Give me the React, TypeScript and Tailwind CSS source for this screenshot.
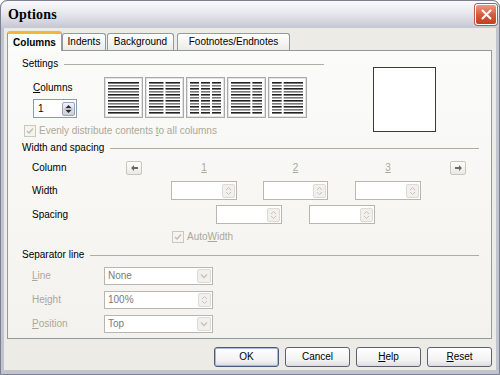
import React from "react";

// Options dialog, Windows XP silver look

const DIS = "text-[#aca899]";

function U({ children }: { children: React.ReactNode }) {
  return <span className="underline underline-offset-[1px]">{children}</span>;
}

function Heading({ label, width }: { label: string; width: number }) {
  return (
    <div className="flex items-center h-[14px]" style={{ width }}>
      <span className="text-black leading-[14px]">{label}</span>
      <div className="flex-1 h-px bg-[#aeaca4] ml-[6px]" />
    </div>
  );
}

function ColIcon({ cols }: { cols: number[] }) {
  const W = 31;
  const gap = 2;
  const sum = cols.reduce((a, b) => a + b, 0);
  const avail = W - gap * (cols.length - 1);
  let x = 4;
  const segs = cols.map((c) => {
    const w = (avail * c) / sum;
    const s = { x, w };
    x += w + gap;
    return s;
  });
  const rows = Array.from({ length: 11 }, (_, i) => 5 + i * 3);
  return (
    <svg width="39" height="41" viewBox="0 0 39 41">
      <rect x="0.5" y="0.5" width="38" height="40" fill="#fff" stroke="#a9a9a9" />
      <rect x="1.5" y="1.5" width="36" height="38" fill="#fff" stroke="#e2e2e2" />
      {rows.map((y, i) =>
        segs.map((s, j) => (
          <rect key={`${i}-${j}`} x={s.x} y={y} width={s.w} height="1.6" fill={i % 2 ? "#7a7a7a" : "#222"} />
        ))
      )}
    </svg>
  );
}

function SpinArrows({ enabled }: { enabled: boolean }) {
  const c = enabled ? "#2b2b2b" : "#c5c3b8";
  return (
    <div
      className={`w-[13px] h-[14px] mr-[1px] rounded-[2px] border ${
        enabled ? "border-[#9aa2b4] bg-[linear-gradient(to_bottom,#f2f3f7,#c9cdd9)]" : "border-[#dcdad2] bg-[#f1f0ec]"
      } flex items-center justify-center`}
    >
      <svg width="9" height="10" viewBox="0 0 9 10">
        {enabled ? (
          <>
            <path d="M1.5 4 L4.5 1 L7.5 4 Z" fill={c} />
            <path d="M1.5 6 L4.5 9 L7.5 6 Z" fill={c} />
            <line x1="0.5" y1="5" x2="8.5" y2="5" stroke="#9aa2b4" strokeWidth="1" />
          </>
        ) : (
          <>
            <path d="M2 4 L4.5 1.5 L7 4" fill="none" stroke={c} strokeWidth="1" />
            <path d="M2 6 L4.5 8.5 L7 6" fill="none" stroke={c} strokeWidth="1" />
          </>
        )}
      </svg>
    </div>
  );
}

function SpinBox({ width, value, enabled }: { width: number; value?: string; enabled?: boolean }) {
  return (
    <div
      className={`h-[19px] bg-white border ${enabled ? "border-[#8a9ab0]" : "border-[#b8b6ad]"} flex items-center`}
      style={{ width }}
    >
      <span className={`flex-1 pl-[4px] ${enabled ? "text-black" : "text-[#7a7a7a]"}`}>{value}</span>
      <SpinArrows enabled={!!enabled} />
    </div>
  );
}

function Combo({ value, spin }: { value: string; spin?: boolean }) {
  return (
    <div className="w-[109px] h-[18px] bg-white border border-[#b8b6ad] flex items-center">
      <span className="flex-1 pl-[3px] text-[#7a7a7a]">{value}</span>
      {spin ? (
        <SpinArrows enabled={false} />
      ) : (
        <div className="w-[14px] h-[14px] mr-[1px] rounded-[2px] border border-[#dcdad2] bg-[#f1f0ec] flex items-center justify-center">
          <svg width="8" height="6" viewBox="0 0 8 6">
            <path d="M1 1.5 L4 4.5 L7 1.5" fill="none" stroke="#c5c3b8" strokeWidth="1.3" />
          </svg>
        </div>
      )}
    </div>
  );
}

function CheckBox() {
  return (
    <div className="w-[12px] h-[12px] border border-[#cac8bb] bg-[#f5f4ef] flex items-center justify-center">
      <svg width="8" height="8" viewBox="0 0 8 8">
        <path d="M1 4 L3 6 L7 1.5" fill="none" stroke="#c0beb2" strokeWidth="1.5" />
      </svg>
    </div>
  );
}

function ArrowBtn({ dir }: { dir: "left" | "right" }) {
  return (
    <div className="w-[16px] h-[14px] rounded-[2px] border border-[#c9c7bd] bg-[linear-gradient(to_bottom,#ffffff,#e9e8e2)] flex items-center justify-center">
      <svg width="7" height="6" viewBox="0 0 7 6">
        {dir === "left" ? (
          <path d="M0 3 L3 0 L3 2 L7 2 L7 4 L3 4 L3 6 Z" fill="#6a6a6a" />
        ) : (
          <path d="M7 3 L4 0 L4 2 L0 2 L0 4 L4 4 L4 6 Z" fill="#6a6a6a" />
        )}
      </svg>
    </div>
  );
}

function Button({ children, def }: { children: React.ReactNode; def?: boolean }) {
  return (
    <div
      className={`w-[65px] h-[20px] rounded-[3px] border ${
        def ? "border-[#4e5a7a] shadow-[inset_0_0_0_1px_#a9b7d9]" : "border-[#5c6072]"
      } bg-[linear-gradient(to_bottom,#ffffff,#f2f2f2_70%,#dcdce2)] flex items-center justify-center text-black`}
    >
      {children}
    </div>
  );
}

const tabBase = "h-[17px] px-[5px] flex items-center border border-b-0 border-[#919b9c] rounded-t-[3px] bg-[linear-gradient(to_bottom,#ffffff,#ecebe6)]";

export default function App() {
  return (
    <div className="w-[500px] h-[375px] flex flex-col bg-[#c1c3cf] rounded-t-[7px] border border-[#7d8093] font-['Liberation_Sans',Arial,sans-serif] text-[10px] leading-[12px] overflow-hidden">
      {/* title bar */}
      <div className="h-[27px] shrink-0 flex items-center pl-[7px] pr-[2px] rounded-t-[7px] bg-[linear-gradient(to_bottom,#fbfbfd,#e7e8ee_45%,#c4c7d4)]">
        <span className="font-['Liberation_Serif',serif] font-bold text-[14px] text-black tracking-[0.2px]">Options</span>
        <div className="ml-auto w-[22px] h-[21px] rounded-[3px] border border-white bg-[linear-gradient(to_bottom,#eb9a82,#d4593a_55%,#c2401f)] shadow-[0_0_0_1px_#b55b48] flex items-center justify-center">
          <svg width="11" height="11" viewBox="0 0 11 11">
            <path d="M1.5 1.5 L9.5 9.5 M9.5 1.5 L1.5 9.5" stroke="#fff" strokeWidth="2" strokeLinecap="round" />
          </svg>
        </div>
      </div>

      {/* body */}
      <div className="flex-1 mx-[3px] mb-[4px] bg-[#ecebe6] pt-[3px] flex flex-col">
        {/* tabs */}
        <div className="flex items-end h-[19px] pl-[3px]">
          <div className="relative z-10 mb-[-1px] w-[55px] h-[20px] flex items-center justify-center border border-b-0 border-[#919b9c] border-t-[3px] border-t-[#f5b43c] rounded-t-[3px] bg-[#fcfcfb] font-bold text-black">
            Columns
          </div>
          <div className={`${tabBase} w-[44px] justify-center text-black`}>Indents</div>
          <div className={`${tabBase} w-[67px] ml-[1px] justify-center text-black`}>Background</div>
          <div className={`${tabBase} w-[113px] ml-[3px] justify-center text-black`}>Footnotes/Endnotes</div>
        </div>

        {/* tab panel */}
        <div className="ml-[3px] w-[485px] h-[289px] border border-[#919b9c] bg-[linear-gradient(to_bottom,#fbfbf9,#f3f2ee)] pl-[14px] pt-[6px]">
          {/* Settings */}
          <div className="flex">
            <div className="w-[302px]">
              <Heading label="Settings" width={302} />
              <div className="flex mt-[6px] h-[41px]">
                <div className="ml-[11px] w-[71px] flex flex-col">
                  <span className="mt-[5px] h-[14px] text-black">
                    <U>C</U>olumns
                  </span>
                  <div className="mt-[3px]">
                    <SpinBox width={44} value="1" enabled />
                  </div>
                </div>
                <div className="flex gap-[2px]">
                  <ColIcon cols={[1]} />
                  <ColIcon cols={[1, 1]} />
                  <ColIcon cols={[1, 1, 1]} />
                  <ColIcon cols={[2, 1]} />
                  <ColIcon cols={[1, 2]} />
                </div>
              </div>
              <div className={`flex items-center mt-[6px] h-[13px] ${DIS}`}>
                <div className="ml-[2px]">
                  <CheckBox />
                </div>
                <span className="ml-[3px]">
                  Evenly distribute contents <U>t</U>o all columns
                </span>
              </div>
            </div>
            <div className="ml-[49px] mt-[10px] w-[63px] h-[65px] bg-white border-[1.5px] border-[#3a3a3a]" />
          </div>

          {/* Width and spacing */}
          <div className="mt-[4px]">
            <Heading label="Width and spacing" width={457} />
          </div>
          <div className="flex items-center mt-[6px] h-[14px]">
            <span className="w-[104px] pl-[10px] text-black">Column</span>
            <ArrowBtn dir="left" />
            <span className={`ml-[29px] w-[66px] text-center ${DIS}`}>
              <U>1</U>
            </span>
            <span className={`ml-[26px] w-[65px] text-center ${DIS}`}>
              <U>2</U>
            </span>
            <span className={`ml-[27px] w-[66px] text-center ${DIS}`}>
              <U>3</U>
            </span>
            <div className="ml-[29px]">
              <ArrowBtn dir="right" />
            </div>
          </div>
          <div className="flex items-center mt-[6px] h-[19px]">
            <span className="w-[149px] pl-[10px] text-black">Width</span>
            <SpinBox width={66} />
            <div className="ml-[26px]">
              <SpinBox width={65} />
            </div>
            <div className="ml-[27px]">
              <SpinBox width={66} />
            </div>
          </div>
          <div className="flex items-center mt-[5px] h-[19px]">
            <span className="w-[194px] pl-[10px] text-black">Spacing</span>
            <SpinBox width={66} />
            <div className="ml-[27px]">
              <SpinBox width={66} />
            </div>
          </div>
          <div className={`flex items-center mt-[6px] h-[14px] ${DIS}`}>
            <div className="ml-[150px]">
              <CheckBox />
            </div>
            <span className="ml-[3px]">
              Auto<U>W</U>idth
            </span>
          </div>

          {/* Separator line */}
          <div className="mt-[4px]">
            <Heading label="Separator line" width={457} />
          </div>
          <div className="flex items-center mt-[5px] h-[18px]">
            <span className={`w-[82px] pl-[10px] ${DIS}`}>
              <U>L</U>ine
            </span>
            <Combo value="None" />
          </div>
          <div className="flex items-center mt-[6px] h-[18px]">
            <span className={`w-[82px] pl-[10px] ${DIS}`}>
              He<U>i</U>ght
            </span>
            <Combo value="100%" spin />
          </div>
          <div className="flex items-center mt-[6px] h-[18px]">
            <span className={`w-[82px] pl-[10px] ${DIS}`}>
              <U>P</U>osition
            </span>
            <Combo value="Top" />
          </div>
        </div>

        {/* buttons */}
        <div className="flex justify-end gap-[6px] pr-[4px] mt-[8px]">
          <Button def>OK</Button>
          <Button>Cancel</Button>
          <Button>
            <U>H</U>elp
          </Button>
          <Button>
            <U>R</U>eset
          </Button>
        </div>
      </div>
    </div>
  );
}
